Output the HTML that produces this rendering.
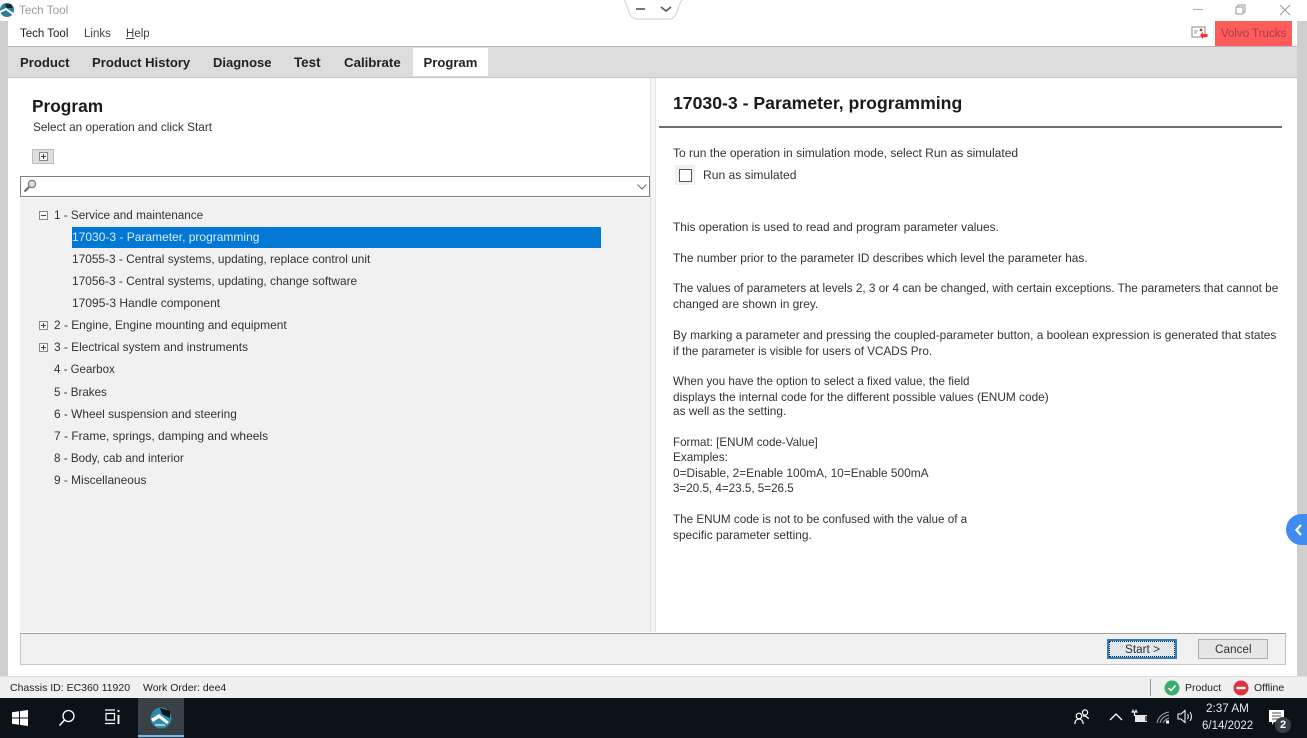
<!DOCTYPE html>
<html>
<head>
<meta charset="utf-8">
<style>
html,body{margin:0;padding:0;width:1307px;height:738px;overflow:hidden;background:#fff;font-family:"Liberation Sans",Arial,sans-serif;color:#333;}
.a{position:absolute;}
.t{position:absolute;white-space:nowrap;font-size:11.75px;line-height:14px;}
.l{position:absolute;white-space:nowrap;font-size:11.88px;line-height:14px;}
.tab{position:absolute;top:55px;white-space:nowrap;font-size:13.1px;line-height:16px;font-weight:bold;color:#222;}
.ex{position:absolute;left:39px;width:7px;height:7px;border:1px solid #8a8a8a;background:#f8f8f8;}
.ex:before{content:"";position:absolute;left:1px;top:3px;width:5px;height:1px;background:#444;}
.ex.p:after{content:"";position:absolute;left:3px;top:1px;width:1px;height:5px;background:#444;}
</style>
</head>
<body>
<!-- title bar -->
<svg class="a" style="left:0;top:2px" width="15" height="16" viewBox="0 0 15 16"><circle cx="7" cy="8" r="7" fill="#2a7f99"/><path d="M0 10 L6 7 L13 12" stroke="#fff" stroke-width="2" fill="none"/><path d="M5 2.500 L11 2 L13 6 L7 6Z" fill="#123"/></svg>
<div class="t" style="left:19px;top:4px;color:#9a9a9a;font-size:11.700px">Tech Tool</div>
<svg class="a" style="left:620px;top:0" width="66" height="22" viewBox="0 0 66 22"><path d="M4 0 C8 4 8 18 16 19 L50 19 C58 18 58 4 62 0" fill="#fff" stroke="#d8d8d8" stroke-width="1.200"/><path d="M16 9 H25" stroke="#555" stroke-width="1.600"/><path d="M41 7 L46 11 L51 7" stroke="#555" stroke-width="1.600" fill="none"/></svg>
<svg class="a" style="left:1190px;top:2px" width="105" height="16" viewBox="0 0 105 16"><path d="M3 7.500 H13" stroke="#aaa"/><path d="M46 5 H53 V12 H46Z M48 5 V3 H55 V10 H53" stroke="#999" fill="none"/><path d="M90 3 L100 13 M100 3 L90 13" stroke="#999" fill="none"/></svg>

<!-- side strips -->
<div class="a" style="left:0;top:21px;width:8px;height:655px;background:#cfcfcf"></div>
<div class="a" style="left:1297px;top:21px;width:10px;height:655px;background:#cfcfcf"></div>

<!-- menu -->
<div class="t" style="left:20px;top:27px;color:#222;font-size:11.500px">Tech Tool</div>
<div class="t" style="left:84px;top:27px;color:#444;font-size:11.500px">Links</div>
<div class="t" style="left:126px;top:27px;color:#444;font-size:11.500px"><u>H</u>elp</div>
<svg class="a" style="left:1191px;top:26px" width="18" height="14" viewBox="0 0 18 14"><rect x="1" y="1" width="13" height="10" fill="#fff" stroke="#888"/><path d="M3 5 H7 M3 7 H6" stroke="#999"/><circle cx="10" cy="4" r="1.400" fill="#c33"/><path d="M9 9 L12 6 V8 H16.500 V11 H12 V13Z" fill="#e33"/></svg>
<div class="a" style="left:1215px;top:21px;width:77px;height:25px;background:#ff5c5c"></div>
<div class="t" style="left:1221px;top:27px;color:#a83c44;font-size:11.500px">Volvo Trucks</div>

<!-- tab bar -->
<div class="a" style="left:8px;top:46px;width:1289px;height:32px;background:#dcdcdc;border-top:1px solid #b9b9b9;border-bottom:1px solid #c6c6c6;box-sizing:border-box"></div>
<div class="a" style="left:413px;top:48px;width:75px;height:28px;background:#fff"></div>
<div class="tab" style="left:20px">Product</div>
<div class="tab" style="left:92px">Product History</div>
<div class="tab" style="left:213px;font-size:13px">Diagnose</div>
<div class="tab" style="left:294px;font-size:13.400px">Test</div>
<div class="tab" style="left:344px;font-size:13.250px">Calibrate</div>
<div class="tab" style="left:423.500px">Program</div>

<!-- left -->
<div class="t" style="left:32px;top:96px;font-size:17.300px;line-height:21px;font-weight:bold;color:#1a1a1a">Program</div>
<div class="l" style="left:33px;top:120px;font-size:11.800px">Select an operation and click Start</div>
<div class="a" style="left:32px;top:149px;width:20px;height:13px;background:#dedede;border:1px solid #bdbdbd;"></div>
<div class="ex p" style="left:39px;top:152px"></div>

<div class="a" style="left:20px;top:176px;width:628px;height:19px;background:#fff;border:1px solid #7f7f7f"></div>
<svg class="a" style="left:23px;top:179px" width="14" height="14" viewBox="0 0 14 14"><circle cx="9" cy="5" r="3.600" fill="#ddd" stroke="#777" stroke-width="1.200"/><path d="M6 8 L1.500 12.500" stroke="#666" stroke-width="2"/></svg>
<svg class="a" style="left:636px;top:183px" width="12" height="8" viewBox="0 0 12 8"><path d="M1.500 1.500 L6 6 L10.500 1.500" stroke="#666" fill="none"/></svg>

<div class="a" style="left:20px;top:198px;width:630px;height:434px;background:#f1f1f1"></div>
<div class="a" style="left:650px;top:78px;width:1px;height:554px;background:#e2e2e2"></div>
<div class="a" style="left:651px;top:78px;width:4px;height:554px;background:#f4f4f4"></div>
<div class="a" style="left:655px;top:78px;width:1px;height:554px;background:#e6e6e6"></div>

<div class="ex" style="top:211px"></div>
<div class="l" style="left:54px;top:209px;font-size:11.720px">1 - Service and maintenance</div>
<div class="a" style="left:72px;top:227px;width:529px;height:21px;background:#0078d4"></div>
<div class="l" style="left:72px;top:230px;color:#dcebf8;font-size:12px">17030-3 - Parameter, programming</div>
<div class="l" style="left:72px;top:252px">17055-3 - Central systems, updating, replace control unit</div>
<div class="l" style="left:72px;top:274px">17056-3 - Central systems, updating, change software</div>
<div class="l" style="left:72px;top:296px;font-size:12px">17095-3 Handle component</div>
<div class="ex p" style="top:321px"></div>
<div class="l" style="left:54px;top:318px;font-size:11.930px">2 - Engine, Engine mounting and equipment</div>
<div class="ex p" style="top:343px"></div>
<div class="l" style="left:54px;top:340px">3 - Electrical system and instruments</div>
<div class="l" style="left:54px;top:363px;font-size:11.500px">4 - Gearbox</div>
<div class="l" style="left:54px;top:386px;font-size:11.600px">5 - Brakes</div>
<div class="l" style="left:54px;top:407px">6 - Wheel suspension and steering</div>
<div class="l" style="left:54px;top:429px;font-size:12px">7 - Frame, springs, damping and wheels</div>
<div class="l" style="left:54px;top:452px;font-size:11.700px">8 - Body, cab and interior</div>
<div class="l" style="left:54px;top:473px">9 - Miscellaneous</div>

<!-- right -->
<div class="t" style="left:673px;top:93px;font-size:17.650px;line-height:21px;font-weight:bold;color:#1a1a1a">17030-3 - Parameter, programming</div>
<div class="a" style="left:659px;top:126px;width:623px;height:2px;background:#6e6e6e"></div>
<div class="t" style="left:673px;top:146px;font-size:12.040px">To run the operation in simulation mode, select Run as simulated</div>
<div class="a" style="left:675px;top:165px;width:20px;height:20px;background:#f1f1f1"></div>
<div class="a" style="left:679px;top:169px;width:11px;height:11px;background:#fff;border:1px solid #555"></div>
<div class="t" style="left:703px;top:168px;font-size:12.100px">Run as simulated</div>
<div class="t" style="left:673px;top:220px;font-size:11.900px">This operation is used to read and program parameter values.</div>
<div class="t" style="left:673px;top:251px;font-size:11.870px">The number prior to the parameter ID describes which level the parameter has.</div>
<div class="t" style="left:673px;top:282px">The values of parameters at levels 2, 3 or 4 can be changed, with certain exceptions. The parameters that cannot be</div>
<div class="t" style="left:673px;top:297px;font-size:11.900px">changed are shown in grey.</div>
<div class="t" style="left:673px;top:328px;font-size:11.880px">By marking a parameter and pressing the coupled-parameter button, a boolean expression is generated that states</div>
<div class="t" style="left:673px;top:345px;font-size:11.700px">if the parameter is visible for users of VCADS Pro.</div>
<div class="t" style="left:673px;top:375px;font-size:11.600px">When you have the option to select a fixed value, the field</div>
<div class="t" style="left:673px;top:390px;font-size:11.850px">displays the internal code for the different possible values (ENUM code)</div>
<div class="t" style="left:673px;top:404px;font-size:11.850px">as well as the setting.</div>
<div class="t" style="left:673px;top:436px;font-size:11.600px">Format: [ENUM code-Value]</div>
<div class="t" style="left:673px;top:451px">Examples:</div>
<div class="t" style="left:673px;top:466px;font-size:11.870px">0=Disable, 2=Enable 100mA, 10=Enable 500mA</div>
<div class="t" style="left:673px;top:482px;font-size:11.650px">3=20.5, 4=23.5, 5=26.5</div>
<div class="t" style="left:673px;top:513px;font-size:11.670px">The ENUM code is not to be confused with the value of a</div>
<div class="t" style="left:673px;top:528px;font-size:11.900px">specific parameter setting.</div>

<!-- side bubble -->
<div class="a" style="left:1286px;top:514px;width:21px;height:31px;background:#3f8cf2;border-radius:16px 0 0 16px"></div>
<svg class="a" style="left:1294px;top:523px" width="10" height="14" viewBox="0 0 10 14"><path d="M7 2 L2.500 7 L7 12" stroke="#fff" stroke-width="2.400" fill="none"/></svg>

<!-- footer -->
<div class="a" style="left:20px;top:633px;width:1266px;height:32px;box-sizing:border-box;background:#f1f1f1;border:1px solid #c4c4c4;border-top-color:#a0a0a0"></div>
<div class="a" style="left:1107px;top:639px;width:70px;height:20px;box-sizing:border-box;background:#e3e7ec;border:2px solid #2b7fc4"></div>
<div class="a" style="left:1109px;top:641px;width:66px;height:16px;box-sizing:border-box;border:1px dotted #222"></div>
<div class="t" style="left:1125px;top:643px">Start &gt;</div>
<div class="a" style="left:1198px;top:639px;width:70px;height:20px;box-sizing:border-box;background:#e6e6e6;border:1px solid #adadad"></div>
<div class="t" style="left:1215px;top:643px">Cancel</div>

<!-- status -->
<div class="a" style="left:0;top:676px;width:1307px;height:22px;background:#f0f0f0;border-top:1px solid #dcdcdc;box-sizing:border-box"></div>
<div class="t" style="left:10px;top:681px;font-size:10.500px;color:#222">Chassis ID: EC360 11920</div>
<div class="t" style="left:143px;top:681px;font-size:10.500px;color:#222">Work Order: dee4</div>
<div class="a" style="left:1150px;top:679px;width:1px;height:17px;background:#999"></div>
<svg class="a" style="left:1164px;top:680px" width="16" height="16" viewBox="0 0 16 16"><circle cx="8" cy="8" r="7.500" fill="#3cab6b"/><path d="M4.500 8 L7 10.500 L11.500 5.500" stroke="#fff" stroke-width="1.500" fill="none"/></svg>
<div class="t" style="left:1185px;top:681px;font-size:10.500px;color:#222">Product</div>
<svg class="a" style="left:1233px;top:680px" width="16" height="16" viewBox="0 0 16 16"><circle cx="8" cy="8" r="7.500" fill="#d9363e"/><rect x="3.500" y="6.800" width="9" height="2.400" fill="#fff"/></svg>
<div class="t" style="left:1254px;top:681px;font-size:10.500px;color:#222">Offline</div>

<!-- taskbar -->
<div class="a" style="left:0;top:698px;width:1307px;height:40px;background:#0b1218"></div>
<svg class="a" style="left:12px;top:710px" width="16" height="16" viewBox="0 0 16 16"><path d="M0 2.300 L7 1.300 V7.500 H0Z M8 1.100 L16 0 V7.500 H8Z M0 8.500 H7 V14.700 L0 13.700Z M8 8.500 H16 V16 L8 14.900Z" fill="#fff"/></svg>
<svg class="a" style="left:58px;top:709px" width="18" height="18" viewBox="0 0 18 18"><circle cx="10.500" cy="7" r="5.500" stroke="#fff" stroke-width="1.300" fill="none"/><path d="M6.500 11 L1.500 16.500" stroke="#fff" stroke-width="1.500"/></svg>
<svg class="a" style="left:104px;top:709px" width="17" height="16" viewBox="0 0 17 16"><path d="M1 1 H11 M1 14.500 H11 M2 4.500 H10.500 V11 H2Z" stroke="#fff" stroke-width="1.200" fill="none"/><path d="M14.500 1 V3 M14.500 6 V15" stroke="#fff" stroke-width="1.800"/></svg>
<div class="a" style="left:138px;top:698px;width:46px;height:40px;background:#3a4146"></div>
<div class="a" style="left:138px;top:735px;width:46px;height:2px;background:#76b9ed"></div>
<svg class="a" style="left:150px;top:707px" width="22" height="22" viewBox="0 0 22 22"><circle cx="11" cy="11" r="10.500" fill="#2f8ba6"/><path d="M10 1 L20 4 L20 11 L12 7Z" fill="#0b1218"/><path d="M1 12 L9 7 L19 15 L17 17 L9 11 L3 15Z" fill="#fff"/><path d="M5 18 L15 18" stroke="#bfe4ee" stroke-width="1.500"/></svg>

<svg class="a" style="left:1074px;top:708px" width="16" height="17" viewBox="0 0 16 17"><circle cx="5" cy="8" r="2.800" stroke="#fff" stroke-width="1.200" fill="none"/><circle cx="11" cy="4.500" r="2.600" stroke="#fff" stroke-width="1.200" fill="none"/><path d="M0.800 16 C1 12.500 3 11 5 11 C7 11 9 12.500 9.200 16 M9 8 C11 8 13.500 8.500 14.500 11" stroke="#fff" stroke-width="1.200" fill="none"/></svg>
<svg class="a" style="left:1109px;top:712px" width="14" height="9" viewBox="0 0 14 9"><path d="M1 8 L7 2 L13 8" stroke="#fff" stroke-width="1.300" fill="none"/></svg>
<svg class="a" style="left:1131px;top:709px" width="17" height="14" viewBox="0 0 17 14"><rect x="4" y="6" width="12" height="7" fill="#e8e8e8"/><rect x="14" y="7" width="2" height="5" fill="#555"/><path d="M0.500 3 H6.500 M2 0.500 V3 M5 0.500 V3 M3.500 3 V7" stroke="#fff" stroke-width="1.200"/></svg>
<svg class="a" style="left:1156px;top:711px" width="15" height="14" viewBox="0 0 15 14"><path d="M1 12 C2 6 7 2 13 1 M4 12 C5 8 8 5 13 4 M7 12 C8 10 10 8 13 7" stroke="#aaa" fill="none"/><rect x="10" y="9.500" width="3" height="3" fill="#fff"/></svg>
<svg class="a" style="left:1177px;top:709px" width="17" height="15" viewBox="0 0 17 15"><path d="M1 5 H4 L8 1.500 V13.500 L4 10 H1Z" stroke="#fff" fill="none"/><path d="M10.500 5 C11.500 6.500 11.500 8.500 10.500 10 M13 3 C15 6 15 9 13 12" stroke="#fff" fill="none"/></svg>
<div class="t" style="left:1206px;top:702px;color:#e8e8e8;font-size:11.700px">2:37 AM</div>
<div class="t" style="left:1202px;top:719px;color:#e8e8e8;font-size:11.500px">6/14/2022</div>
<svg class="a" style="left:1268px;top:708px" width="24" height="26" viewBox="0 0 24 26"><path d="M1 2 H16 V14 H6 L4 17 V14 H1Z" fill="#fff"/><path d="M4 5 H13 M4 8 H13 M4 11 H10" stroke="#555"/><circle cx="15" cy="17" r="8" fill="#3a3f44"/></svg>
<div class="t" style="left:1280px;top:718px;color:#fff;font-size:11px;font-weight:bold">2</div>
</body>
</html>
